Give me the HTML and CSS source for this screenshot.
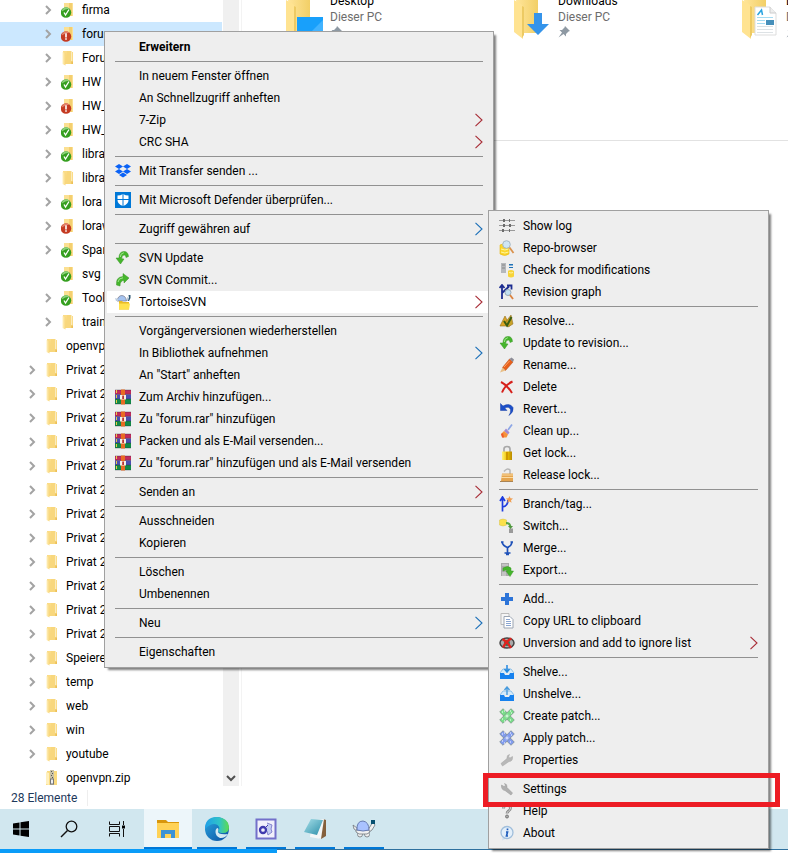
FILE: index.html
```html
<!DOCTYPE html>
<html lang="de">
<head>
<meta charset="utf-8">
<title>Explorer</title>
<link rel="stylesheet" href="styles.css">
</head>
<body>
<svg class="sprite" aria-hidden="true">
  <defs>
    <linearGradient id="gFold" x1="0" x2="1"><stop offset="0" stop-color="#fff0bd"/><stop offset="1" stop-color="#f8d67a"/></linearGradient>
    <linearGradient id="gBig" x1="0" x2="1"><stop offset="0" stop-color="#ffe59a"/><stop offset="1" stop-color="#f2cf66"/></linearGradient>
    <linearGradient id="gGold" x1="0" x2="1"><stop offset="0" stop-color="#fff27a"/><stop offset=".5" stop-color="#f0c400"/><stop offset="1" stop-color="#b98a00"/></linearGradient>
    <linearGradient id="gEdge" x1="0" y1="0" x2="1" y2="1"><stop offset="0" stop-color="#2aa7e0"/><stop offset="1" stop-color="#0b4fa0"/></linearGradient>
    <linearGradient id="gEdge2" x1="0" x2="1"><stop offset="0" stop-color="#1f9fe8"/><stop offset=".6" stop-color="#2fc3c8"/><stop offset="1" stop-color="#5fdc4c"/></linearGradient>
    <linearGradient id="gNote" x1="0" y1="0" x2="1" y2="1"><stop offset="0" stop-color="#a8e0ea"/><stop offset="1" stop-color="#2b8ea8"/></linearGradient>
  </defs>
  <symbol id="chev" viewBox="0 0 8 10"><path d="M2 1l4 4-4 4" fill="none" stroke="#a3a3a3" stroke-width="2"/></symbol>
  <symbol id="arrow" viewBox="0 0 8 14"><path d="M.5 .8L7 7 .5 13.200" fill="none" stroke="currentColor" stroke-width="1.100"/></symbol>
  <symbol id="folder" viewBox="0 0 16 16"><path d="M2 1h8v10h1V2h1v12H2z" fill="#fbdc87"/><path d="M6 1h4.500v10.500h1V14H4z" fill="#f8d77d"/><path d="M1.500 2l3 1.300V15.500L1.500 14z" fill="url(#gFold)"/><path d="M10.500 11.500h1.300V14h-1.300z" fill="#e9b94f"/></symbol>
  <symbol id="folder-ok" viewBox="0 0 16 16"><path d="M3 1h9v13H3z" fill="#fbe092"/><path d="M8 1h3v13H8z" fill="#f4cf70"/><circle cx="5" cy="10.500" r="5.200" fill="#359f1f"/><path d="M.8 9.500a4.300 4.300 0 0 1 7.500-2.700Q4 7 .8 9.500z" fill="#8bd07a"/><path d="M3 10.500l1.500 2.500L8 7.500" fill="none" stroke="#fff" stroke-width="1.300"/></symbol>
  <symbol id="folder-mod" viewBox="0 0 16 16"><path d="M3 1h9v13H3z" fill="#fbe092"/><path d="M8 1h3v13H8z" fill="#f4cf70"/><circle cx="5" cy="10.500" r="5.200" fill="#c43a22"/><path d="M.8 9.500a4.300 4.300 0 0 1 7.500-2.700Q4 7 .8 9.500z" fill="#e3836c"/><path d="M5 7.300v4.200M5 12.300v1.500" stroke="#fff" stroke-width="1.600"/></symbol>
  <symbol id="zip" viewBox="0 0 16 16"><path d="M2 1h10v14H1z" fill="#f9da7f"/><path d="M1 2l3 1v12l-3-1z" fill="#fff0bd"/><path d="M5 0h4v15H5z" fill="#c8c1a6"/><path d="M6 1h1v1H6zm1 2h1v1H7zM6 5h1v1H6zm1 2h1v1H7z" fill="#555"/><rect x="5.500" y="9" width="3" height="5" fill="#eee" stroke="#777"/></symbol>
  <symbol id="dropbox" viewBox="0 0 16 16"><g fill="#0a62f6"><path d="M4 1l4 2.500L4 6 0 3.500zM12 1l4 2.500L12 6 8 3.500zM4 6l4 2.500L4 11 0 8.500zM12 6l4 2.500L12 11 8 8.500zM8 9.500l4 2.500-4 2.500L4 12z"/></g></symbol>
  <symbol id="defender" viewBox="0 0 16 16"><path d="M0 0h16v16H0z" fill="#0078d7"/><path d="M8 2q2.500 1.500 5.500 1.500V8q0 4-5.500 6Q2.500 12 2.500 8V3.500Q5.500 3.500 8 2z" fill="#fff"/><path d="M8 2v12M2 7.500h12" stroke="#0078d7"/></symbol>
  <symbol id="update" viewBox="0 0 16 16"><path d="M13.500 6.500Q13 1 8.500 1.500 4 2 4 8H1l4.500 6L9 9l-2.300-.3Q6.500 5.500 9 5q2-.3 2 2.500z" fill="#45b52c" stroke="#3a9426" stroke-width=".5"/><path d="M5.300 7q0-3.700 3.500-4.300" fill="none" stroke="#a3e690"/></symbol>
  <symbol id="commit" viewBox="0 0 16 16"><path d="M1.500 13Q.5 5 8 4.500V1.500L14 6l-5 5V8.500Q5 8.500 5 14z" fill="#45b52c" stroke="#3a9426" stroke-width=".5"/><path d="M3 10Q3.500 6 8 5.800" fill="none" stroke="#a3e690"/></symbol>
  <symbol id="tsvn" viewBox="0 0 16 16"><path d="M2 7Q3 1.500 7 1.500 11 2 11.500 7z" fill="#a5c3ef" stroke="#778" stroke-width=".7"/><path d="M0 4l3 1v2H1zM12 7V3l2 1v3z" fill="#bcd"/><path d="M13.500 1h2v3l-1.500 3h-1l1-3z" fill="#2c5470"/><path d="M4 7h3l1 1h6v7.500H4z" fill="#e8bb27"/><path d="M4 9.500h11l-1 6H4z" fill="#ffe24f"/></symbol>
  <symbol id="rar" viewBox="0 0 16 16"><path d="M0 1h16v4.500H0z" fill="#c02a5c"/><path d="M0 5.500h16V10H0z" fill="#4a4fb0"/><path d="M0 10h16v5H0z" fill="#128a47"/><path d="M0 1h16M0 5.300h16M0 10h16M0 15h16" stroke="#223" stroke-opacity=".5" stroke-width=".7"/><path d="M6 .5h4v15H6z" fill="#e86b22"/><path d="M5 6h6v4.500H5z" fill="#f4efe5"/><path d="M7.200 6.500H9V10H7.200z" fill="#b33"/><path d="M1.500 1v14" stroke="#e7c947" stroke-dasharray="3 2"/></symbol>
  <symbol id="log" viewBox="0 0 16 16"><g fill="#9a9a9a"><path d="M0 2h16v1H0zM0 7h16v1H0zM0 12h16v1H0z"/><path d="M4 1h2v3H4zM10 6h2v3h-2zM3 11h2v3H3zM10 1h1v3h-1zM10 11h1v3h-1zM4 6h2v3H4z" fill="#6c6c6c"/></g></symbol>
  <symbol id="repo" viewBox="0 0 16 16"><path d="M1 5q4-3 9 0v9q-4 3-9 0z" fill="#fbd62c" stroke="#e5b714" stroke-width=".6"/><path d="M2 9q4 2 7.500 0M2 12q4 2 7.500 0" fill="none" stroke="#fff6a0"/><circle cx="7.500" cy="4.500" r="3.800" fill="#cfe6f4" stroke="#a3b7c4"/><path d="M10.500 7.500l4 5.500" stroke="#d9924d" stroke-width="1.800"/></symbol>
  <symbol id="check" viewBox="0 0 16 16"><path d="M2 1h5v10H2z" fill="#b5b8bc"/><path d="M3 3h3M3 6h3" stroke="#888"/><path d="M10 2h4v1.500h-4zM10 5h4v1h-4z" fill="#1e72b8"/><path d="M9 9q3-2 6 0v5.500q-3 2-6 0z" fill="#f7d439"/><path d="M10 10.500q2 1 4 0" fill="none" stroke="#fff2a0"/></symbol>
  <symbol id="graph" viewBox="0 0 16 16"><path d="M3 15V2M.5 4L3 1l2.500 3M3 9l7-6.500M8 1.500h4.500v4" fill="none" stroke="#1c2c90" stroke-width="1.800"/><circle cx="9" cy="8.500" r="3" fill="#c3e0f0" stroke="#93a9b8"/><path d="M11 11l3 4" stroke="#db8340" stroke-width="1.800"/></symbol>
  <symbol id="resolve" viewBox="0 0 16 16"><path d="M6 3l5 10H1z" fill="#dda525" stroke="#8f6b18" stroke-width=".6"/><path d="M12 2l2 9-5 3-3-4z" fill="#c9a227" stroke="#88651a" stroke-width=".5"/><path d="M5 8l3 4.500L12.500 4" fill="none" stroke="#3b5d12" stroke-width="2"/></symbol>
  <symbol id="rename" viewBox="0 0 16 16"><path d="M10.500 2L14 5l-7.500 8.500-3-3z" fill="#e8601c" stroke="#b04a16" stroke-width=".5"/><path d="M10.500 2l2-1.500 2.500 2L14 5z" fill="#8c8c96"/><path d="M3.500 10.500l3 3L1 15.500z" fill="#e9bf86"/><path d="M10.500 4L5 10" stroke="#ffa260"/></symbol>
  <symbol id="delete" viewBox="0 0 16 16"><path d="M2 3q6 3 11 11M13.500 2.500Q6 6 3 13.500" fill="none" stroke="#d6201b" stroke-width="2"/></symbol>
  <symbol id="revert" viewBox="0 0 16 16"><path d="M1.500 2.500v7H8L5.800 7Q10 5 11.500 8.500q.5 3-1.500 6Q15 11 14 6.500 11 1.500 4 5z" fill="#1c4fc8" stroke="#1a43a8" stroke-width=".5"/></symbol>
  <symbol id="clean" viewBox="0 0 16 16"><path d="M13 1.500L9 7" stroke="#8ca6e6" stroke-width="1.700"/><path d="M7 5.500l3.500 4L9 11.500 5 8z" fill="#a28ad2"/><path d="M5 8l4 3.500-1.500 3H3.500L2 11z" fill="#f5923a"/><path d="M2 11l2-1 1 4.500H3z" fill="#ef5a2c"/></symbol>
  <symbol id="lock" viewBox="0 0 16 16"><path d="M5 7V4q0-2.500 3-2.500T11 4v3" fill="none" stroke="#a8a8a8" stroke-width="1.700"/><path d="M3 6.500h10V15H3z" fill="url(#gGold)"/><path d="M7 7h2v8H7z" fill="#cf9800"/></symbol>
  <symbol id="unlock" viewBox="0 0 16 16"><path d="M5 4.500Q8 .5 11 3v4" fill="none" stroke="#b5b5b5" stroke-width="1.500"/><path d="M3 6.500h11V14H2z" fill="#e5a54f"/><path d="M3 8h11M2 10.500h12" stroke="#fbdba3"/><path d="M1 14h13v1H1z" fill="#a98455"/></symbol>
  <symbol id="branch" viewBox="0 0 16 16"><path d="M3.500 15.500V2M1 5l2.500-4L6 5M3.500 11Q9 10 9 4" fill="none" stroke="#1d3ce0" stroke-width="1.700"/><path d="M10.500 0l1 2.200 2.500.3-2 1.800.6 2.500-2.100-1.200-2.200 1.200.6-2.500-2-1.800 2.500-.3z" fill="#f09f52"/></symbol>
  <symbol id="switch" viewBox="0 0 16 16"><path d="M.500 2q3.500-2 7 0v5q-3.500 2-7 0z" fill="#fbe04a" stroke="#d9c24a" stroke-width=".5"/><path d="M7 5q4 0 4.500 4" fill="none" stroke="#57a344" stroke-width="2"/><path d="M10 10.500h4V15h-4z" fill="#9a9a9a"/><path d="M9 8h5l-2.500 3z" fill="#4f963f"/></symbol>
  <symbol id="merge" viewBox="0 0 16 16"><path d="M3 2q1 4 5.500 5.500Q12.500 6 13 2M8.500 7v7M5.500 13h6M7 14.500h3M2 2h2.500M11.500 2H14" fill="none" stroke="#1d50b8" stroke-width="1.700"/></symbol>
  <symbol id="export" viewBox="0 0 16 16"><path d="M2 1h8v13H2z" fill="#aaa"/><path d="M3 3h6M3 11h4M3 13h4" stroke="#dedede"/><path d="M4 6q5-3 8 0v3h2.500L11 14.500 7 9h2q-2-2-5 0z" fill="#45b52c" stroke="#3a9b25" stroke-width=".5"/></symbol>
  <symbol id="add" viewBox="0 0 16 16"><path d="M6 2h4v4h4v4h-4v4H6v-4H2V6h4z" fill="#2d74d8"/></symbol>
  <symbol id="copy" viewBox="0 0 16 16"><path d="M2 .5h8v11H2z" fill="#f5f5f5" stroke="#bbb"/><path d="M5 3.500h6l3 3v8.500H5z" fill="#fff" stroke="#9aa4b2"/><path d="M7 6.500h4M7 8.500h5M7 10.500h5M7 12.500h5" stroke="#8aa5d0"/></symbol>
  <symbol id="unversion" viewBox="0 0 16 16"><ellipse cx="8" cy="8" rx="7" ry="5" fill="#aaa" stroke="#444" stroke-width="1.500"/><circle cx="8" cy="8" r="3" fill="#375"/><path d="M3.500 4q5 3 8.500 9M12.500 3.500Q7 6 4 12.500" fill="none" stroke="#df241e" stroke-width="2.300"/></symbol>
  <symbol id="shelve" viewBox="0 0 16 16"><path d="M1 9l3-4h8l3 4" fill="#d5eaf9" stroke="#8cc0e8"/><path d="M1 9h4l1 2h4l1-2h4v6H1z" fill="#1681ee"/><path d="M8 1v6M5.500 5L8 8l2.500-3" fill="none" stroke="#2488df" stroke-width="1.500"/></symbol>
  <symbol id="unshelve" viewBox="0 0 16 16"><path d="M1 9l3-4h8l3 4" fill="#d5eaf9" stroke="#8cc0e8"/><path d="M1 9h4l1 2h4l1-2h4v6H1z" fill="#1681ee"/><path d="M8 9V2M5.500 4L8 1l2.500 3" fill="none" stroke="#489bdd" stroke-width="1.400"/></symbol>
  <symbol id="patch" viewBox="0 0 16 16"><path d="M4 .7L15.300 12 12 15.300.7 4z" fill="currentColor" stroke="#6f8078" stroke-width=".6"/><path d="M12 .7L.7 12 4 15.300 15.300 4z" fill="currentColor" stroke="#6f8078" stroke-width=".6"/><path d="M8 5l3 3-3 3-3-3z" fill="#fff" fill-opacity=".25"/><path d="M3 4h1M5 3h1M11 3h1M12 5h1M3 11h1M5 13h1M11 12h1M7 8h2" stroke="#fff"/></symbol>
  <symbol id="props" viewBox="0 0 16 16"><path d="M13.500 4.500L11 6 9.500 5l1-2.500Q7.500 3 8 6.500L2 11.500l1.500 2.500L10 9.500q4 0 3.500-5z" fill="#b8b8b8" stroke="#a4a4a4" stroke-width=".5"/></symbol>
  <symbol id="settings" viewBox="0 0 16 16"><path d="M2.500 4L5 5.500 6.500 4.500 5.500 2.500Q8.500 3 8 6.500l5.500 5.500-1.500 2L6 9.500Q2 9 2.500 4z" fill="#b0b0b0" stroke="#989898" stroke-width=".5"/></symbol>
  <symbol id="help" viewBox="0 0 16 16"><path d="M4.500 5.500Q4.500 2 8 2t3.500 3q0 2-2 3Q8 9 8 10.500" fill="none" stroke="#888" stroke-width="2.800"/><path d="M4.500 5.500Q4.500 2 8 2t3.500 3q0 2-2 3Q8 9 8 10.500" fill="none" stroke="#d5d5d5"/><circle cx="8" cy="13.500" r="1.500" fill="#aaa" stroke="#777"/></symbol>
  <symbol id="about" viewBox="0 0 16 16"><path d="M4 12l-1 3.500 4-2z" fill="#cfe0f0"/><circle cx="8" cy="7.500" r="6" fill="#e3effa" stroke="#a0bedb" stroke-width="1.300"/><path d="M8.500 3.500v1.800M7 7h1.500L7.500 11H9" fill="none" stroke="#225fbd" stroke-width="1.700"/></symbol>
  <symbol id="pin" viewBox="0 0 12 12"><path d="M7 0l5 5-1.500.5L8 8v2.500L5.500 8 .5 11.500 4 6.500 1.500 4H4l2.500-2.500z" fill="#8e99a3"/></symbol>
  <symbol id="bigfolder" viewBox="0 0 40 40"><path d="M2 0h22v33H6z" fill="url(#gBig)"/><path d="M0 0l7 4q2 1 2 4v31L0 32z" fill="#ffe391"/><path d="M8 6v32l2-3V7z" fill="#edca63"/></symbol>
</svg>

<main class="explorer">
  <nav class="side" aria-label="Ordner">
    <ul class="tree">
      <li class="deep"><svg class="ch"><use href="#chev"/></svg><svg class="ic"><use href="#folder-ok"/></svg><span>firma</span></li>
      <li class="deep selected"><svg class="ch"><use href="#chev"/></svg><svg class="ic"><use href="#folder-mod"/></svg><span>forum</span></li>
      <li class="deep"><svg class="ch"><use href="#chev"/></svg><svg class="ic"><use href="#folder"/></svg><span>Forum</span></li>
      <li class="deep"><svg class="ch"><use href="#chev"/></svg><svg class="ic"><use href="#folder-ok"/></svg><span>HW</span></li>
      <li class="deep"><svg class="ch"><use href="#chev"/></svg><svg class="ic"><use href="#folder-mod"/></svg><span>HW_</span></li>
      <li class="deep"><svg class="ch"><use href="#chev"/></svg><svg class="ic"><use href="#folder-ok"/></svg><span>HW_</span></li>
      <li class="deep"><svg class="ch"><use href="#chev"/></svg><svg class="ic"><use href="#folder-ok"/></svg><span>libra</span></li>
      <li class="deep"><svg class="ch"><use href="#chev"/></svg><svg class="ic"><use href="#folder"/></svg><span>libra</span></li>
      <li class="deep"><svg class="ch"><use href="#chev"/></svg><svg class="ic"><use href="#folder-ok"/></svg><span>lora</span></li>
      <li class="deep"><svg class="ch"><use href="#chev"/></svg><svg class="ic"><use href="#folder-mod"/></svg><span>loraw</span></li>
      <li class="deep"><svg class="ch"><use href="#chev"/></svg><svg class="ic"><use href="#folder-ok"/></svg><span>Span</span></li>
      <li class="deep"><svg class="ch"></svg><svg class="ic"><use href="#folder-ok"/></svg><span>svg S</span></li>
      <li class="deep"><svg class="ch"><use href="#chev"/></svg><svg class="ic"><use href="#folder-ok"/></svg><span>Tools</span></li>
      <li class="deep"><svg class="ch"><use href="#chev"/></svg><svg class="ic"><use href="#folder"/></svg><span>train</span></li>
      <li><svg class="ch"></svg><svg class="ic"><use href="#folder"/></svg><span>openvpn</span></li>
      <li><svg class="ch"><use href="#chev"/></svg><svg class="ic"><use href="#folder"/></svg><span>Privat 2</span></li>
      <li><svg class="ch"><use href="#chev"/></svg><svg class="ic"><use href="#folder"/></svg><span>Privat 2</span></li>
      <li><svg class="ch"><use href="#chev"/></svg><svg class="ic"><use href="#folder"/></svg><span>Privat 2</span></li>
      <li><svg class="ch"><use href="#chev"/></svg><svg class="ic"><use href="#folder"/></svg><span>Privat 2</span></li>
      <li><svg class="ch"><use href="#chev"/></svg><svg class="ic"><use href="#folder"/></svg><span>Privat 2</span></li>
      <li><svg class="ch"><use href="#chev"/></svg><svg class="ic"><use href="#folder"/></svg><span>Privat 2</span></li>
      <li><svg class="ch"><use href="#chev"/></svg><svg class="ic"><use href="#folder"/></svg><span>Privat 2</span></li>
      <li><svg class="ch"><use href="#chev"/></svg><svg class="ic"><use href="#folder"/></svg><span>Privat 2</span></li>
      <li><svg class="ch"><use href="#chev"/></svg><svg class="ic"><use href="#folder"/></svg><span>Privat 2</span></li>
      <li><svg class="ch"><use href="#chev"/></svg><svg class="ic"><use href="#folder"/></svg><span>Privat 2</span></li>
      <li><svg class="ch"><use href="#chev"/></svg><svg class="ic"><use href="#folder"/></svg><span>Privat 2</span></li>
      <li><svg class="ch"><use href="#chev"/></svg><svg class="ic"><use href="#folder"/></svg><span>Privat 2</span></li>
      <li><svg class="ch"><use href="#chev"/></svg><svg class="ic"><use href="#folder"/></svg><span>Speiere</span></li>
      <li><svg class="ch"><use href="#chev"/></svg><svg class="ic"><use href="#folder"/></svg><span>temp</span></li>
      <li><svg class="ch"><use href="#chev"/></svg><svg class="ic"><use href="#folder"/></svg><span>web</span></li>
      <li><svg class="ch"><use href="#chev"/></svg><svg class="ic"><use href="#folder"/></svg><span>win</span></li>
      <li><svg class="ch"><use href="#chev"/></svg><svg class="ic"><use href="#folder"/></svg><span>youtube</span></li>
      <li><svg class="ch"></svg><svg class="ic"><use href="#zip"/></svg><span>openvpn.zip</span></li>
    </ul>
    <div class="scroll"><svg width="16" height="16" viewBox="0 0 16 16"><path d="M4 6l4 4 4-4" fill="none" stroke="#505050" stroke-width="2"/></svg></div>
  </nav>
  <section class="content">
    <div class="tiles">
      <div class="tile">
        <svg class="big" viewBox="0 0 40 40"><use href="#bigfolder"/><path d="M11 17h26v18H11z" fill="#18a0fb"/><path d="M22 35L37 20v15z" fill="#42b3ff"/></svg>
        <div class="label"><span>Desktop</span><span class="sub">Dieser PC</span><svg class="pin"><use href="#pin"/></svg></div>
      </div>
      <div class="tile">
        <svg class="big" viewBox="0 0 40 40"><use href="#bigfolder"/><path d="M20 13h8v11h7L24 35 13 24h7z" fill="#3594ea"/></svg>
        <div class="label"><span>Downloads</span><span class="sub">Dieser PC</span><svg class="pin"><use href="#pin"/></svg></div>
      </div>
      <div class="tile">
        <svg class="big" viewBox="0 0 40 40"><use href="#bigfolder"/><path d="M13 7h15l6 6v22H13z" fill="#fff" stroke="#ddd"/><path d="M28 7v6h6" fill="#eee" stroke="#ccc"/><path d="M15.500 15l4-5 1 5" fill="none" stroke="#2aa3e0" stroke-width="1.500"/><path d="M15 17.500h16M15 20.500h8M15 23.500h8" fill="none" stroke="#a5dcf3"/><path d="M24 20h8v5h-8z" fill="#468fba"/><path d="M15 26.500h16M15 29.500h16M15 32.500h16" stroke="#dde2e5"/></svg>
        <div class="label"><span>Dokumente</span><span class="sub">Dieser PC</span><svg class="pin"><use href="#pin"/></svg></div>
      </div>
    </div>
  </section>
</main>
<div class="status"><span>28 Elemente</span></div>
<footer class="taskbar">
  <button class="start" aria-label="Start"><svg width="18" height="18" viewBox="0 0 18 18"><path d="M1 3.500l6.500-1v6H1zM8.500 2.300L17 1v7.500H8.500zM1 9.500h6.500v6L1 14.500zM8.500 9.500H17V17l-8.500-1.300z"/></svg></button>
  <button aria-label="Suchen"><svg width="18" height="18" viewBox="0 0 18 18"><path d="M7.500 10.500L1 17" stroke="#111" stroke-width="1.500"/><circle cx="11.500" cy="6.500" r="5.300" fill="none" stroke="#111" stroke-width="1.300"/></svg></button>
  <button class="view" aria-label="Aktive Anwendungen"><svg width="18" height="18" viewBox="0 0 18 18"><path d="M1.500 1.500v3h10v-3M1.500 16.500v-3h10v3M1.500 6.500h10v5h-10zM15.500 1v4M15.500 9v8" fill="none" stroke="#111"/><path d="M14 5.500h3v3h-3z"/></svg></button>
  <button class="app current" aria-label="Explorer"><svg width="24" height="24" viewBox="0 0 24 24"><path d="M1 3h9l2 2h11v4H1z" fill="#d8960c"/><path d="M1 6h22v15H1z" fill="#ffd257"/><path d="M5 21v-8h14v8h-4v-4H9v4z" fill="#3c92d5"/></svg></button>
  <button class="app" aria-label="Edge"><svg width="26" height="26" viewBox="0 0 26 26"><circle cx="13" cy="13" r="12" fill="url(#gEdge)"/><path d="M1 13Q1 1 13 1q11.500 1 12 10 0 6-6 6-4 0-5-2 3-3-.5-6Q8 6 1 13z" fill="url(#gEdge2)"/><path d="M14 15q-.5 4 10 3-3 4.500-8 4-5-2-4.500-7 .5-3 2.500-3 1 2 0 3z" fill="#d3e9f1"/></svg></button>
  <button class="app" aria-label="Editor"><svg width="22" height="22" viewBox="0 0 22 22"><path d="M1.500 1.500h19v19h-19z" fill="#f1f0fb" stroke="#7370ca" stroke-width="2"/><path d="M12 5l5 2-1 4 1 3-4 3-1-4" fill="#c3cdf2" stroke="#8583ce"/><circle cx="8" cy="12" r="3" fill="none" stroke="#403aae" stroke-width="2.300"/><path d="M10 10l3-3" stroke="#403aae"/></svg></button>
  <button class="app" aria-label="Notizblock"><svg width="24" height="24" viewBox="0 0 24 24"><path d="M20 2l3 1v16l-5 3-2-1z" fill="#84603c"/><path d="M9 3l12-1-3 20-11-2z" fill="#f4f7f7"/><path d="M8 2l12 1-6 15-13-3z" fill="url(#gNote)"/></svg></button>
  <button class="app" aria-label="TortoiseSVN"><svg width="24" height="24" viewBox="0 0 24 24"><path d="M1 8l4 3v3l-3-2zM16 13l3-5 2-3 2 3-3 5-3 2z" fill="#f0f0f0" stroke="#70767c" stroke-width=".8"/><circle cx="8" cy="17.500" r="2.500" fill="#f0f0f0" stroke="#70767c" stroke-width=".8"/><circle cx="15" cy="17.500" r="2.500" fill="#f0f0f0" stroke="#70767c" stroke-width=".8"/><path d="M4 13h13l1 2-3 2H7l-3-2z" fill="#f0f0f0" stroke="#70767c" stroke-width=".8"/><path d="M5 13Q4.500 4 11 4q6 1 6 9-6 2-12 0z" fill="#a9c2ff" stroke="#667bb0"/><path d="M19 3h4v4h-4z" fill="#075070"/></svg></button>
</footer>
<div class="strip"><span></span></div>

<div class="menu main" role="menu">
  <button class="item strong"><span class="slot"></span>Erweitern</button>
  <hr>
  <button class="item"><span class="slot"></span>In neuem Fenster öffnen</button>
  <button class="item"><span class="slot"></span>An Schnellzugriff anheften</button>
  <button class="item"><span class="slot"></span>7-Zip<svg class="more red"><use href="#arrow"/></svg></button>
  <button class="item"><span class="slot"></span>CRC SHA<svg class="more red"><use href="#arrow"/></svg></button>
  <hr>
  <button class="item"><svg class="slot"><use href="#dropbox"/></svg>Mit Transfer senden ...</button>
  <hr>
  <button class="item"><svg class="slot"><use href="#defender"/></svg>Mit Microsoft Defender überprüfen...</button>
  <hr>
  <button class="item"><span class="slot"></span>Zugriff gewähren auf<svg class="more"><use href="#arrow"/></svg></button>
  <hr>
  <button class="item"><svg class="slot"><use href="#update"/></svg>SVN Update</button>
  <button class="item"><svg class="slot"><use href="#commit"/></svg>SVN Commit...</button>
  <button class="item open"><svg class="slot"><use href="#tsvn"/></svg>TortoiseSVN<svg class="more red"><use href="#arrow"/></svg></button>
  <hr>
  <button class="item"><span class="slot"></span>Vorgängerversionen wiederherstellen</button>
  <button class="item"><span class="slot"></span>In Bibliothek aufnehmen<svg class="more"><use href="#arrow"/></svg></button>
  <button class="item"><span class="slot"></span>An "Start" anheften</button>
  <button class="item"><svg class="slot"><use href="#rar"/></svg>Zum Archiv hinzufügen...</button>
  <button class="item"><svg class="slot"><use href="#rar"/></svg>Zu "forum.rar" hinzufügen</button>
  <button class="item"><svg class="slot"><use href="#rar"/></svg>Packen und als E-Mail versenden...</button>
  <button class="item"><svg class="slot"><use href="#rar"/></svg>Zu "forum.rar" hinzufügen und als E-Mail versenden</button>
  <hr>
  <button class="item"><span class="slot"></span>Senden an<svg class="more red"><use href="#arrow"/></svg></button>
  <hr>
  <button class="item"><span class="slot"></span>Ausschneiden</button>
  <button class="item"><span class="slot"></span>Kopieren</button>
  <hr>
  <button class="item"><span class="slot"></span>Löschen</button>
  <button class="item"><span class="slot"></span>Umbenennen</button>
  <hr>
  <button class="item"><span class="slot"></span>Neu<svg class="more"><use href="#arrow"/></svg></button>
  <hr>
  <button class="item"><span class="slot"></span>Eigenschaften</button>
</div>

<div class="menu svn" role="menu">
  <button class="item"><svg class="slot"><use href="#log"/></svg>Show log</button>
  <button class="item"><svg class="slot"><use href="#repo"/></svg>Repo-browser</button>
  <button class="item"><svg class="slot"><use href="#check"/></svg>Check for modifications</button>
  <button class="item"><svg class="slot"><use href="#graph"/></svg>Revision graph</button>
  <hr>
  <button class="item"><svg class="slot"><use href="#resolve"/></svg>Resolve...</button>
  <button class="item"><svg class="slot"><use href="#update"/></svg>Update to revision...</button>
  <button class="item"><svg class="slot"><use href="#rename"/></svg>Rename...</button>
  <button class="item"><svg class="slot"><use href="#delete"/></svg>Delete</button>
  <button class="item"><svg class="slot"><use href="#revert"/></svg>Revert...</button>
  <button class="item"><svg class="slot"><use href="#clean"/></svg>Clean up...</button>
  <button class="item"><svg class="slot"><use href="#lock"/></svg>Get lock...</button>
  <button class="item"><svg class="slot"><use href="#unlock"/></svg>Release lock...</button>
  <hr>
  <button class="item"><svg class="slot"><use href="#branch"/></svg>Branch/tag...</button>
  <button class="item"><svg class="slot"><use href="#switch"/></svg>Switch...</button>
  <button class="item"><svg class="slot"><use href="#merge"/></svg>Merge...</button>
  <button class="item"><svg class="slot"><use href="#export"/></svg>Export...</button>
  <hr>
  <button class="item"><svg class="slot"><use href="#add"/></svg>Add...</button>
  <button class="item"><svg class="slot"><use href="#copy"/></svg>Copy URL to clipboard</button>
  <button class="item"><svg class="slot"><use href="#unversion"/></svg>Unversion and add to ignore list<svg class="more red"><use href="#arrow"/></svg></button>
  <hr>
  <button class="item"><svg class="slot"><use href="#shelve"/></svg>Shelve...</button>
  <button class="item"><svg class="slot"><use href="#unshelve"/></svg>Unshelve...</button>
  <button class="item"><svg class="slot green"><use href="#patch"/></svg>Create patch...</button>
  <button class="item"><svg class="slot blue"><use href="#patch"/></svg>Apply patch...</button>
  <button class="item"><svg class="slot"><use href="#props"/></svg>Properties</button>
  <hr>
  <button class="item marked"><svg class="slot"><use href="#settings"/></svg>Settings</button>
  <button class="item"><svg class="slot"><use href="#help"/></svg>Help</button>
  <button class="item"><svg class="slot"><use href="#about"/></svg>About</button>
</div>
</body>
</html>
```
FILE: styles.css
```css
* { box-sizing: border-box; }

body {
  margin: 0;
  height: 100vh;
  display: flex;
  flex-direction: column;
  position: relative;
  overflow: hidden;
  background: #fff;
  color: #000;
  font: 12px/16px "Segoe UI", Roboto, "Open Sans", sans-serif;
}

button {
  font: inherit;
  color: inherit;
  border: 0;
  padding: 0;
  margin: 0;
  background: none;
}

svg { display: block; flex: none; }
.sprite { position: absolute; width: 0; height: 0; }

.explorer { flex: 1; min-height: 0; display: flex; overflow: hidden; }

.side {
  flex: none;
  width: 242px;
  display: flex;
  border-right: 1px solid #f3f3f3;
}

.tree {
  flex: none;
  width: 222px;
  list-style: none;
  margin: -2px 1px 0 0;
  padding: 0;
}
.tree li {
  height: 24px;
  display: flex;
  align-items: center;
  padding-left: 28px;
  white-space: nowrap;
}
.tree .deep { padding-left: 44px; }
.tree .selected { background: #cce8ff; }
.ch { width: 8px; height: 10px; margin-right: 9px; }
.ic { width: 16px; height: 16px; margin-right: 5px; }

.scroll { width: 16px; background: #f0f0f0; display: flex; align-items: flex-end; }

.content { flex: 1; min-width: 0; overflow: hidden; }
.tiles {
  height: 141px;
  display: flex;
  padding-left: 44px;
  border-bottom: 1px solid #e2e2e2;
}
.tile { flex: none; width: 228px; display: flex; gap: 4px; }
.big { width: 40px; height: 40px; }
.label { display: flex; flex-direction: column; margin-top: -7px; }
.label .sub { color: #6d6d6d; }
.pin { width: 12px; height: 12px; margin-top: 1px; }

.status {
  flex: none;
  height: 23px;
  display: flex;
  align-items: center;
  padding: 0 11px;
  color: #1e395b;
}
.status span { padding-right: 10px; border-right: 1px solid #eee; }

.taskbar {
  flex: none;
  height: 40px;
  display: flex;
  background: #d1e7ef;
}
.taskbar button {
  width: 48px;
  display: flex;
  align-items: center;
  justify-content: center;
}
.taskbar .start { width: 42px; margin-right: 3px; }
.taskbar .view { margin-right: 3px; }
.taskbar .app {
  margin-right: 1px;
  background: linear-gradient(#0078d7, #0078d7) 4px 100% / 40px 2px no-repeat;
}
.taskbar .current {
  background: linear-gradient(#0078d7, #0078d7) 0 100% / 48px 2px no-repeat #edf6fa;
}

.strip { flex: none; height: 4px; border-top: 1px solid #2f719f; }
.strip span { display: block; width: 277px; height: 4px; margin-top: -1px; background: #0a9cf8; }

.menu {
  position: absolute;
  padding: 4px 2px;
  border: 1px solid #a0a0a0;
  background: #eee;
  box-shadow: 3px 3px 2px -1px rgba(0, 0, 0, .5);
}
.main { left: 104px; top: 31px; width: 390px; }
.svn { left: 488px; top: 210px; width: 281px; }

.item {
  width: 100%;
  height: 22px;
  display: flex;
  align-items: center;
  padding: 0 8px;
  white-space: nowrap;
  position: relative;
}
.strong { font-weight: 700; }
.open { background: #fff; }
.slot { flex: none; width: 16px; height: 16px; margin-right: 8px; }
.green { color: #79dd89; }
.blue { color: #829cee; }
.more { width: 8px; height: 14px; margin-left: auto; color: #1a6fb8; }
.red { color: #a82c36; }

.menu hr {
  height: 1px;
  margin: 3px 8px;
  border: 0;
  background: #919191;
}

/* Highlight frame drawn around the chosen entry */
.marked::after {
  content: "";
  position: absolute;
  z-index: 1;
  inset: -5px -14px -7px -8px;
  border: 5px solid #ed1c24;
}
```
